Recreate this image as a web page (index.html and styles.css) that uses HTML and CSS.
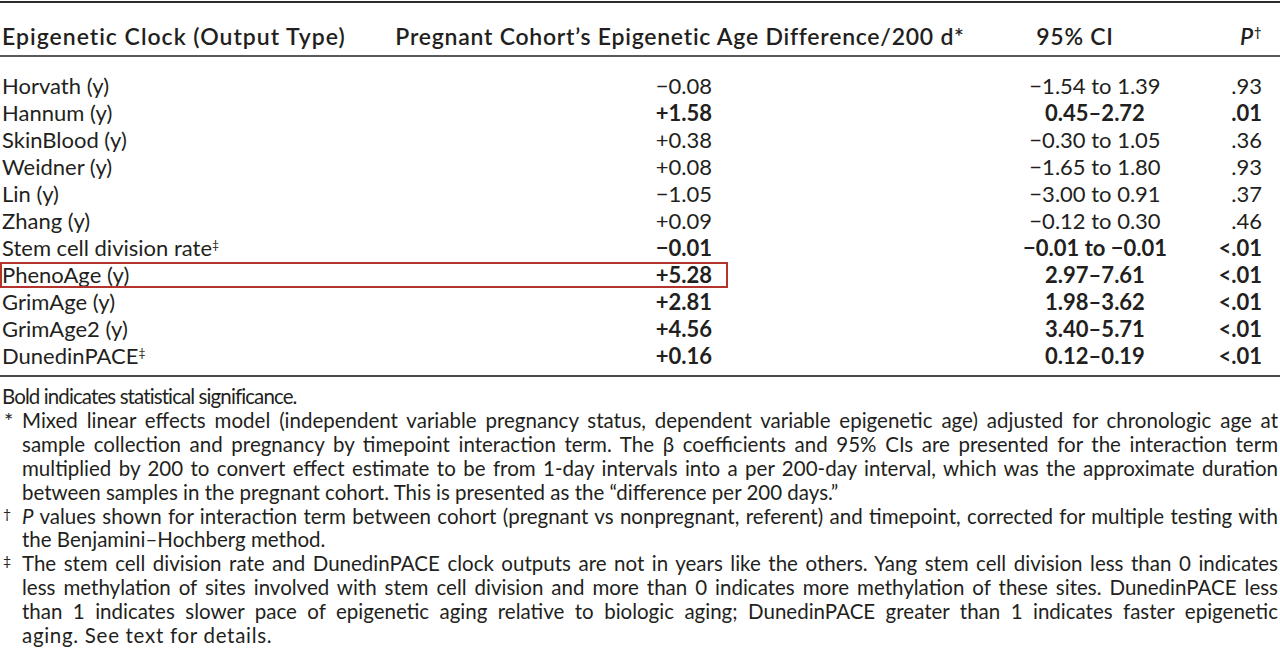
FILE: index.html
```html
<!DOCTYPE html>
<html lang="en">
<head>
<meta charset="utf-8">
<title>Epigenetic clocks table</title>
<link rel="stylesheet" href="styles.css">
</head>
<body>
<table class="clocks">
  <colgroup>
    <col class="w-name"><col class="w-diff"><col class="w-ci"><col class="w-p">
  </colgroup>
  <thead>
    <tr>
      <th class="name">Epigenetic Clock (Output Type)</th>
      <th class="diff">Pregnant Cohort’s Epigenetic Age Difference/200 d*</th>
      <th class="ci">95% CI</th>
      <th class="p"><i>P</i><span class="sup">†</span></th>
    </tr>
  </thead>
  <tbody>
    <tr><td class="name">Horvath (y)</td><td class="diff">−0.08</td><td class="ci">−1.54 to 1.39</td><td class="p">.93</td></tr>
    <tr><td class="name">Hannum (y)</td><td class="diff sig">+1.58</td><td class="ci sig">0.45–2.72</td><td class="p sig">.01</td></tr>
    <tr><td class="name">SkinBlood (y)</td><td class="diff">+0.38</td><td class="ci">−0.30 to 1.05</td><td class="p">.36</td></tr>
    <tr><td class="name">Weidner (y)</td><td class="diff">+0.08</td><td class="ci">−1.65 to 1.80</td><td class="p">.93</td></tr>
    <tr><td class="name">Lin (y)</td><td class="diff">−1.05</td><td class="ci">−3.00 to 0.91</td><td class="p">.37</td></tr>
    <tr><td class="name">Zhang (y)</td><td class="diff">+0.09</td><td class="ci">−0.12 to 0.30</td><td class="p">.46</td></tr>
    <tr><td class="name">Stem cell division rate<span class="sup">‡</span></td><td class="diff sig">−0.01</td><td class="ci sig">−0.01 to −0.01</td><td class="p sig">&lt;.01</td></tr>
    <tr><td class="name hl-cell">PhenoAge (y)<span class="hl"></span></td><td class="diff sig">+5.28</td><td class="ci sig">2.97–7.61</td><td class="p sig">&lt;.01</td></tr>
    <tr><td class="name">GrimAge (y)</td><td class="diff sig">+2.81</td><td class="ci sig">1.98–3.62</td><td class="p sig">&lt;.01</td></tr>
    <tr><td class="name">GrimAge2 (y)</td><td class="diff sig">+4.56</td><td class="ci sig">3.40–5.71</td><td class="p sig">&lt;.01</td></tr>
    <tr><td class="name">DunedinPACE<span class="sup">‡</span></td><td class="diff sig">+0.16</td><td class="ci sig">0.12–0.19</td><td class="p sig">&lt;.01</td></tr>
  </tbody>
</table>

<div class="notes">
  <p class="plain tight">Bold indicates statistical significance.</p>
  <div class="note">
    <span class="mark star">*</span>
    <div class="text">
      <span class="ln">Mixed linear effects model (independent variable pregnancy status, dependent variable epigenetic age) adjusted for chronologic age at</span>
      <span class="ln">sample collection and pregnancy by timepoint interaction term. The β coefficients and 95% CIs are presented for the interaction term</span>
      <span class="ln">multiplied by 200 to convert effect estimate to be from 1-day intervals into a per 200-day interval, which was the approximate duration</span>
      <span class="ln end">between samples in the pregnant cohort. This is presented as the “difference per 200 days.”</span>
    </div>
  </div>
  <div class="note">
    <span class="mark">†</span>
    <div class="text">
      <span class="ln"><i>P</i> values shown for interaction term between cohort (pregnant vs nonpregnant, referent) and timepoint, corrected for multiple testing with</span>
      <span class="ln end">the Benjamini–Hochberg method.</span>
    </div>
  </div>
  <div class="note">
    <span class="mark">‡</span>
    <div class="text">
      <span class="ln">The stem cell division rate and DunedinPACE clock outputs are not in years like the others. Yang stem cell division less than 0 indicates</span>
      <span class="ln">less methylation of sites involved with stem cell division and more than 0 indicates more methylation of these sites. DunedinPACE less</span>
      <span class="ln">than 1 indicates slower pace of epigenetic aging relative to biologic aging; DunedinPACE greater than 1 indicates faster epigenetic</span>
      <span class="ln end loose">aging. See text for details.</span>
    </div>
  </div>
</div>
</body>
</html>
```

FILE: styles.css
```css
* { box-sizing: border-box; }

html, body {
  margin: 0;
  padding: 0;
  background: #ffffff;
}

body {
  width: 1280px;
  height: 651px;
  overflow: hidden;
  font-family: Lato, "Liberation Sans", sans-serif;
  color: #231f20;
}

.clocks {
  width: 1280px;
  table-layout: fixed;
  border-collapse: separate;
  border-spacing: 0;
  margin-top: 1px;
  border-top: 2px solid #2b2b2b;
  border-bottom: 2px solid #4a4a4a;
}

.w-name { width: 380px; }
.w-diff { width: 600px; }
.w-ci { width: 230px; }
.w-p { width: 70px; }

.clocks th {
  font-size: 23px;
  font-weight: 600;
  line-height: 24px;
  letter-spacing: 0.75px;
  padding: 21px 0 7px;
  border-bottom: 2px solid #5a5a5a;
  white-space: nowrap;
}

.clocks th.name { text-align: left; padding-left: 2px; letter-spacing: 1px; }
.clocks th.diff { text-align: center; }
.clocks th.ci { text-align: center; padding-right: 40px; }
.clocks th.p { text-align: right; padding-right: 18px; }

.clocks td {
  font-size: 22px;
  line-height: 27px;
  padding: 0;
  white-space: nowrap;
}

.clocks td.name { padding-left: 2px; }
.clocks td.diff { text-align: right; padding-right: 268px; }
.clocks td.ci { text-align: center; }
.clocks td.p { text-align: right; padding-right: 18px; }

.clocks tbody tr:first-child td { padding-top: 15px; }
.clocks tbody tr:last-child td { padding-bottom: 6px; }

.sig { font-weight: 700; }

.sup {
  font-size: 0.55em;
  vertical-align: 0.6em;
  line-height: 0;
}

.hl-cell { position: relative; }

.hl {
  position: absolute;
  left: 0;
  top: 1px;
  width: 728px;
  height: 26px;
  border: 2px solid #b3342d;
  pointer-events: none;
}

.notes {
  margin-top: 8px;
  padding: 0 2px;
  font-size: 20.5px;
  line-height: 23.9px;
}

.plain { margin: 0; }

.tight { letter-spacing: -0.9px; }
.loose { letter-spacing: 0.7px; }

.note { display: flex; }

.mark {
  flex: none;
  width: 20px;
  font-size: 14px;
  line-height: 18px;
  padding-left: 1px;
}

.mark.star {
  font-size: 22px;
  line-height: 24px;
  padding-left: 2px;
}

.text {
  flex: 1;
  min-width: 0;
}

.ln {
  display: block;
  text-align: justify;
  text-align-last: justify;
}

.ln.end {
  text-align: left;
  text-align-last: left;
}
```
